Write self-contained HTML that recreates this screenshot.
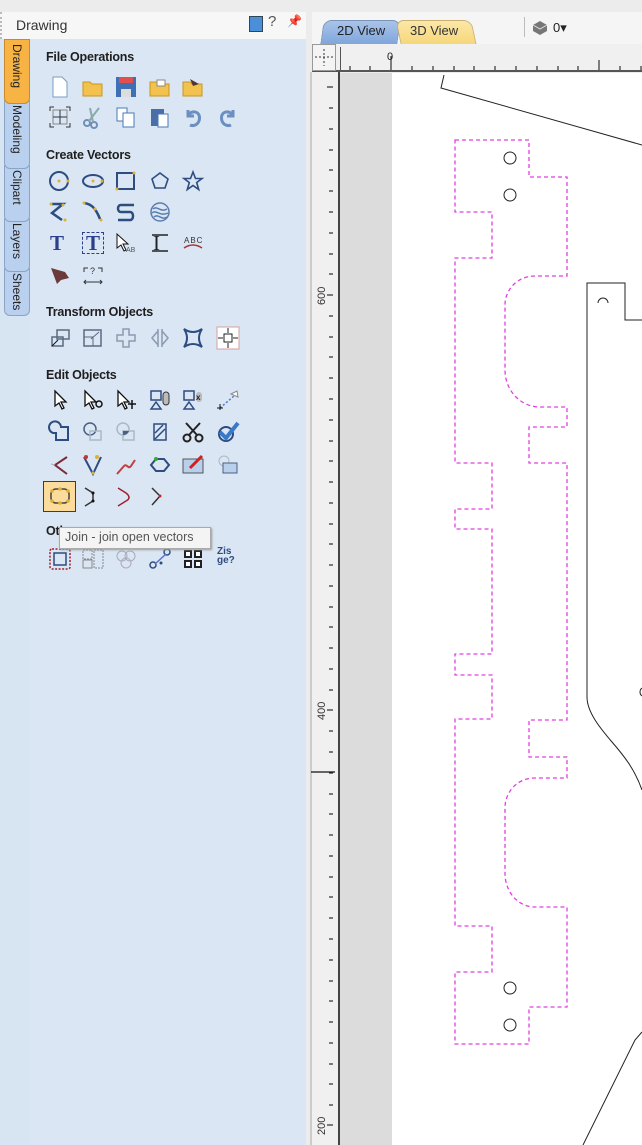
<!DOCTYPE html>
<html><head><meta charset="utf-8"><style>
*{margin:0;padding:0;box-sizing:border-box}
body{width:642px;height:1145px;overflow:hidden;background:#ececec;font-family:"Liberation Sans",sans-serif;position:relative}
.a{position:absolute}
.h{position:absolute;left:46px;font-size:12.5px;font-weight:bold;color:#1e1e1e;letter-spacing:-0.2px}
.tab{position:absolute;left:4px;width:26px;border:1px solid #8aa4c8;border-radius:0 0 6px 6px;background:#b9d0ee;font-size:12px;color:#222}
.tab span{position:absolute;left:5px;top:4px;writing-mode:vertical-rl;white-space:nowrap}
svg.i{position:absolute;width:22px;height:22px;overflow:visible}
</style></head><body>
<!-- left header -->
<div class="a" style="left:0;top:12px;width:306px;height:27px;background:#f7f7f7;border-left:2px dotted #bbb"></div>
<div class="a" style="left:16px;top:17px;font-size:14px;color:#333">Drawing</div>
<div class="a" style="left:249px;top:16px;width:14px;height:16px;border:1px solid #345;background:#4a90d9"></div>
<div class="a" style="left:268px;top:13px;font-size:15px;color:#555">?</div>
<div class="a" style="left:287px;top:14px;font-size:12px;color:#222">&#x1F4CC;</div>
<!-- panel -->
<div class="a" style="left:0;top:39px;width:306px;height:1106px;background:#d7e4f2"></div>
<div class="a" style="left:30px;top:39px;width:276px;height:1106px;background:#dae6f3"></div>
<div class="tab" style="top:268px;height:48px"><span>Sheets</span></div>
<div class="tab" style="top:218px;height:54px"><span>Layers</span></div>
<div class="tab" style="top:165px;height:57px"><span>Clipart</span></div>
<div class="tab" style="top:100px;height:69px"><span>Modeling</span></div>
<div class="tab" style="top:39px;height:65px;background:#f7b445;border-color:#c88a2a"><span>Drawing</span></div>

<div class="h" style="top:50px">File Operations</div>
<div class="h" style="top:148px">Create Vectors</div>
<div class="h" style="top:305px">Transform Objects</div>
<div class="h" style="top:368px">Edit Objects</div>
<div class="h" style="top:524px">Other</div>

<!-- File ops -->
<svg class="i" style="left:49px;top:76px"><path d="M4 1h9l5 5v15H4z" fill="#fff" stroke="#7a9cc8"/></svg>
<svg class="i" style="left:82px;top:76px"><path d="M1 6h7l2 2h10v12H1z" fill="#f3c24e" stroke="#c8951e"/></svg>
<svg class="i" style="left:115px;top:76px"><rect x="1" y="1" width="20" height="20" fill="#3f6fb5"/><rect x="4" y="1" width="14" height="6" fill="#e05050"/><rect x="6" y="13" width="10" height="8" fill="#ddd"/></svg>
<svg class="i" style="left:149px;top:76px"><path d="M1 6h7l2 2h10v12H1z" fill="#f3c24e" stroke="#c8951e"/><rect x="8" y="4" width="8" height="6" fill="#fff" stroke="#888"/></svg>
<svg class="i" style="left:182px;top:76px"><path d="M1 6h7l2 2h10v12H1z" fill="#f3c24e" stroke="#c8951e"/><path d="M8 3l9 5-6 2z" fill="#533"/></svg>
<svg class="i" style="left:49px;top:106px"><rect x="4" y="4" width="14" height="14" fill="none" stroke="#888"/><path d="M11 4v14M4 11h14M1 5V1h4M17 1h4v4M1 17v4h4M21 17v4h-4" stroke="#333" fill="none"/></svg>
<svg class="i" style="left:82px;top:106px"><circle cx="5" cy="17" r="3" fill="none" stroke="#6f8fb8" stroke-width="2"/><circle cx="12" cy="19" r="3" fill="none" stroke="#6f8fb8" stroke-width="2"/><path d="M7 15l10-13M11 16l-3-14" stroke="#8aa" stroke-width="2"/></svg>
<svg class="i" style="left:115px;top:106px"><rect x="2" y="2" width="10" height="13" fill="#fff" stroke="#4a78b8"/><rect x="8" y="7" width="11" height="14" fill="#fff" stroke="#4a78b8"/></svg>
<svg class="i" style="left:149px;top:106px"><rect x="2" y="3" width="13" height="17" fill="#4a6fa8"/><rect x="9" y="8" width="10" height="13" fill="#fff" stroke="#4a78b8"/></svg>
<svg class="i" style="left:182px;top:106px"><path d="M6 4v6h6M6 10c3-7 14-5 11 5-2 5-7 5-9 4" fill="none" stroke="#6a8fc0" stroke-width="3"/></svg>
<svg class="i" style="left:217px;top:106px"><path d="M16 4v6h-6M16 10c-3-7-14-5-11 5 2 5 7 5 9 4" fill="none" stroke="#6a8fc0" stroke-width="3"/></svg>
<!-- Create vectors -->
<g></g>
<svg class="i" style="left:49px;top:170px"><circle cx="10" cy="11" r="9" fill="none" stroke="#2d4c80" stroke-width="2"/><circle cx="10" cy="11" r="1.5" fill="#e0b030"/><circle cx="19" cy="11" r="1.5" fill="#e0b030"/></svg>
<svg class="i" style="left:82px;top:170px"><ellipse cx="11" cy="11" rx="10" ry="6" fill="none" stroke="#2d4c80" stroke-width="2"/><circle cx="11" cy="11" r="1.5" fill="#e0b030"/><circle cx="20" cy="11" r="1.5" fill="#e0b030"/></svg>
<svg class="i" style="left:115px;top:170px"><rect x="2" y="3" width="17" height="16" fill="none" stroke="#2d4c80" stroke-width="2"/><circle cx="19" cy="3" r="1.5" fill="#e0b030"/><circle cx="2" cy="19" r="1.5" fill="#e0b030"/></svg>
<svg class="i" style="left:149px;top:170px"><path d="M11 3l8 6-3 9H6L3 9z" fill="none" stroke="#2d4c80" stroke-width="1.6"/></svg>
<svg class="i" style="left:182px;top:170px"><path d="M11 2l2.5 6.5H20l-5.3 4 2 7L11 15.5 5.3 19.5l2-7L2 8.5h6.5z" fill="none" stroke="#2d4c80" stroke-width="1.6"/></svg>
<svg class="i" style="left:49px;top:201px"><path d="M2 3h12L3 12l10 7" fill="none" stroke="#2d4c80" stroke-width="2.5"/><circle cx="2" cy="3" r="1.5" fill="#e0b030"/><circle cx="14" cy="4" r="1.5" fill="#e0b030"/><circle cx="16" cy="19" r="1.5" fill="#e0b030"/></svg>
<svg class="i" style="left:82px;top:201px"><path d="M2 2c8 1 12 6 16 16" fill="none" stroke="#2d4c80" stroke-width="2.5"/><circle cx="2" cy="2" r="1.5" fill="#e0b030"/><circle cx="13" cy="8" r="1.5" fill="#e0b030"/><circle cx="19" cy="19" r="1.5" fill="#e0b030"/></svg>
<svg class="i" style="left:115px;top:201px"><path d="M19 4H6C2 4 2 11 6 11h9c4 0 4 8 0 8H3" fill="none" stroke="#2d4c80" stroke-width="2.5"/></svg>
<svg class="i" style="left:149px;top:201px"><circle cx="11" cy="11" r="9" fill="none" stroke="#5a7db0" stroke-width="1.5"/><path d="M4 8c4-4 8 4 14 0M3 12c4-4 8 4 16 0M5 16c4-4 8 4 13 0" stroke="#5a7db0" fill="none" stroke-width="1.5"/></svg>
<div class="a" style="left:50px;top:231px;font:bold 21px 'Liberation Serif',serif;color:#2b3f8a">T</div>
<div class="a" style="left:82px;top:232px;width:22px;height:22px;border:1px dashed #2b3f8a"></div>
<div class="a" style="left:86px;top:231px;font:bold 21px 'Liberation Serif',serif;color:#2b3f8a">T</div>
<svg class="i" style="left:115px;top:232px"><path d="M2 2v14l4-3 3 6 2-1-3-6h5z" fill="#fff" stroke="#111"/><text x="11" y="20" font-size="7" fill="#555" font-family="Liberation Sans">AB</text></svg>
<div class="a" style="left:153px;top:231px;font:21px 'Liberation Serif',serif;color:#222">I</div>
<svg class="i" style="left:149px;top:232px"><path d="M3 3h16M3 19h16" stroke="#222" stroke-width="1.5"/></svg>
<div class="a" style="left:184px;top:236px;font-size:8px;color:#333;letter-spacing:1px">ABC</div>
<svg class="i" style="left:182px;top:232px"><path d="M2 16c6-4 12-4 18 0" stroke="#a33" stroke-width="1.5" fill="none"/></svg>
<svg class="i" style="left:49px;top:264px"><path d="M2 4l14 4 4 6-8 2-4 4z" fill="#6b3a3a"/></svg>
<svg class="i" style="left:82px;top:264px"><path d="M2 8V4h4M16 4h4v4M2 18h18M4 16l-2 2 2 2M18 16l2 2-2 2" fill="none" stroke="#333"/><text x="8" y="10" font-size="9" fill="#333" font-family="Liberation Sans">?</text></svg>
<!-- Transform -->
<svg class="i" style="left:49px;top:327px"><rect x="8" y="3" width="12" height="9" fill="none" stroke="#5a6a80" stroke-width="1.5"/><rect x="3" y="10" width="11" height="9" fill="none" stroke="#5a6a80" stroke-width="1.5"/><path d="M3 19l6-6" stroke="#111"/></svg>
<svg class="i" style="left:82px;top:327px"><rect x="2" y="3" width="17" height="16" fill="none" stroke="#5a6a80" stroke-width="1.5"/><path d="M2 10h9v9M9 12l8-7" stroke="#5a6a80" fill="none"/></svg>
<svg class="i" style="left:115px;top:327px"><path d="M8 2h6v6h6v6h-6v6H8v-6H2V8h6z" fill="none" stroke="#8a9ab0" stroke-width="1.5"/></svg>
<svg class="i" style="left:149px;top:327px"><path d="M9 2v18M13 2v18M9 4L3 11l6 7M13 4l6 7-6 7" fill="none" stroke="#8a9ab0" stroke-width="1.5"/></svg>
<svg class="i" style="left:182px;top:327px"><path d="M2 2c6 4 12 4 18 0c-4 6-4 12 0 18c-6-4-12-4-18 0c4-6 4-12 0-18z" fill="none" stroke="#2d4c80" stroke-width="2"/></svg>
<svg class="i" style="left:217px;top:327px"><rect x="0" y="0" width="22" height="22" fill="#fff" stroke="#d8a0a0"/><rect x="7" y="7" width="8" height="8" fill="none" stroke="#222"/><path d="M11 1v5M11 16v5M1 11h5M16 11h5" stroke="#222"/></svg>
<!-- Edit -->
<svg class="i" style="left:49px;top:389px"><path d="M6 2v15l4-3 3 6 2-1-3-6h5z" fill="#fff" stroke="#111" stroke-width="1.3"/></svg>
<svg class="i" style="left:82px;top:389px"><path d="M3 2v15l4-3 3 6 2-1-3-6h5z" fill="#fff" stroke="#111" stroke-width="1.3"/><circle cx="17" cy="15" r="3" fill="none" stroke="#111" stroke-width="1.5"/></svg>
<svg class="i" style="left:115px;top:389px"><path d="M3 2v15l4-3 3 6 2-1-3-6h5z" fill="#fff" stroke="#111" stroke-width="1.3"/><path d="M17 11v9M13 15h8" stroke="#111" stroke-width="1.5"/></svg>
<svg class="i" style="left:149px;top:389px"><rect x="2" y="2" width="10" height="9" fill="none" stroke="#2d4c80" stroke-width="1.5"/><path d="M2 20l5-7 5 7z" fill="none" stroke="#2d4c80" stroke-width="1.5"/><rect x="14" y="3" width="6" height="13" rx="3" fill="#bbb" stroke="#333"/></svg>
<svg class="i" style="left:182px;top:389px"><rect x="2" y="2" width="10" height="9" fill="none" stroke="#2d4c80" stroke-width="1.5"/><path d="M2 20l5-7 5 7z" fill="none" stroke="#2d4c80" stroke-width="1.5"/><rect x="14" y="3" width="6" height="10" rx="3" fill="#bbb"/><text x="14" y="11" font-size="8" font-weight="bold" fill="#222" font-family="Liberation Sans">x</text></svg>
<svg class="i" style="left:217px;top:389px"><path d="M3 19l14-12" stroke="#5a6fd0" stroke-dasharray="2 2" stroke-width="1.5"/><path d="M3 15v6M0 19h6" stroke="#111"/><path d="M14 5l6-3 1 6z" fill="#fff" stroke="#888"/></svg>
<svg class="i" style="left:49px;top:421px"><path d="M4 12a6 6 0 1 1 8-6h7v13H7v-7z" fill="none" stroke="#2d4c80" stroke-width="2"/></svg>
<svg class="i" style="left:82px;top:421px"><circle cx="8" cy="8" r="6" fill="none" stroke="#4a6080" stroke-width="1.5"/><rect x="8" y="10" width="11" height="9" fill="none" stroke="#aab8c8" stroke-width="1.5"/></svg>
<svg class="i" style="left:115px;top:421px"><circle cx="8" cy="8" r="6" fill="none" stroke="#aab8c8" stroke-width="1.5"/><rect x="8" y="10" width="11" height="9" fill="none" stroke="#aab8c8" stroke-width="1.5"/><path d="M8 10h6v0a6 6 0 0 1-6 4z" fill="#4a6080"/></svg>
<svg class="i" style="left:149px;top:421px"><rect x="5" y="3" width="12" height="16" fill="none" stroke="#2d4c80" stroke-width="1.5"/><path d="M6 12l8-8M6 18l10-10" stroke="#2d4c80" stroke-width="1.5"/></svg>
<svg class="i" style="left:182px;top:421px"><circle cx="5" cy="17" r="3.5" fill="none" stroke="#222" stroke-width="2"/><circle cx="17" cy="17" r="3.5" fill="none" stroke="#222" stroke-width="2"/><path d="M7 14L18 2M15 14L4 2" stroke="#222" stroke-width="2"/></svg>
<svg class="i" style="left:217px;top:421px"><circle cx="9" cy="13" r="7" fill="none" stroke="#2d4c80" stroke-width="2"/><path d="M3 11l6 6L21 2" stroke="#3a78c8" stroke-width="4" fill="none"/></svg>
<svg class="i" style="left:49px;top:454px"><path d="M18 3L6 11l12 9" fill="none" stroke="#7a2a3a" stroke-width="2"/><path d="M6 11l-4-1" stroke="#aab"/></svg>
<svg class="i" style="left:82px;top:454px"><path d="M2 3l9 17 8-17" fill="none" stroke="#2d4c80" stroke-width="2"/><circle cx="4" cy="3" r="2" fill="#d03030"/><circle cx="15" cy="3" r="2" fill="#e0b030"/><circle cx="11" cy="19" r="1.5" fill="#e0b030"/></svg>
<svg class="i" style="left:115px;top:454px"><path d="M2 20l7-8c3-3 4 4 7 0l4-6" fill="none" stroke="#c04040" stroke-width="2"/></svg>
<svg class="i" style="left:149px;top:454px"><path d="M7 5h8l5 6-5 6H7l-5-6z" fill="none" stroke="#2d4c80" stroke-width="2"/><circle cx="7" cy="5" r="2" fill="#3a3"/></svg>
<svg class="i" style="left:182px;top:454px"><rect x="1" y="5" width="20" height="14" fill="#b8d0ec" stroke="#555"/><path d="M8 14l12-12" stroke="#d02020" stroke-width="3"/></svg>
<svg class="i" style="left:217px;top:454px"><circle cx="7" cy="7" r="5" fill="none" stroke="#aab8c8"/><rect x="6" y="9" width="14" height="10" fill="#b8d0ec" stroke="#4a6080"/></svg>
<div class="a" style="left:43px;top:481px;width:33px;height:31px;background:#fbdc9c;border:1px solid #2a3a7a"></div>
<svg class="i" style="left:49px;top:485px"><rect x="2" y="4" width="18" height="14" rx="5" fill="none" stroke="#444" stroke-width="1.5"/><circle cx="3" cy="6" r="1.8" fill="#e0b030"/><circle cx="19" cy="6" r="1.8" fill="#e0b030"/><circle cx="3" cy="16" r="1.8" fill="#e0b030"/><circle cx="19" cy="16" r="1.8" fill="#e0b030"/><circle cx="11" cy="18" r="1.8" fill="#e0b030"/><circle cx="11" cy="4" r="1.8" fill="#e0b030"/></svg>
<svg class="i" style="left:82px;top:485px"><path d="M3 3l8 5v8l-8 5" fill="none" stroke="#333" stroke-width="1.5"/><circle cx="11" cy="8" r="1.5" fill="#111"/><circle cx="11" cy="16" r="1.5" fill="#111"/></svg>
<svg class="i" style="left:115px;top:485px"><path d="M3 3l8 5c4 3 4 6 0 8l-8 5" fill="none" stroke="#a02030" stroke-width="1.5"/></svg>
<svg class="i" style="left:149px;top:485px"><path d="M3 3l8 8-8 9" fill="none" stroke="#333" stroke-width="1.5"/><circle cx="11" cy="11" r="1.5" fill="#d02020"/></svg>
<!-- Other row -->
<svg class="i" style="left:49px;top:548px"><rect x="1" y="1" width="20" height="20" rx="2" fill="none" stroke="#a02030" stroke-dasharray="2 1.5" stroke-width="1.5"/><rect x="5" y="5" width="12" height="12" fill="none" stroke="#2d4c80" stroke-width="1.5"/></svg>
<svg class="i" style="left:82px;top:548px"><rect x="1" y="2" width="9" height="9" fill="none" stroke="#888" stroke-dasharray="2 1"/><rect x="12" y="2" width="9" height="18" fill="none" stroke="#888" stroke-dasharray="2 1"/><rect x="1" y="12" width="9" height="8" fill="none" stroke="#888"/></svg>
<svg class="i" style="left:115px;top:548px"><circle cx="7" cy="8" r="5" fill="none" stroke="#aab"/><circle cx="15" cy="8" r="5" fill="none" stroke="#aab"/><circle cx="11" cy="15" r="5" fill="none" stroke="#aab"/></svg>
<svg class="i" style="left:149px;top:548px"><circle cx="4" cy="17" r="3" fill="none" stroke="#2d4c80" stroke-width="1.5"/><circle cx="18" cy="4" r="3" fill="none" stroke="#2d4c80" stroke-width="1.5"/><path d="M6 16l11-10" stroke="#5a6fd0" stroke-width="1.5"/><circle cx="12" cy="15" r="1.5" fill="#2d4c80"/></svg>
<svg class="i" style="left:182px;top:548px"><rect x="2" y="2" width="8" height="8" fill="#222"/><rect x="12" y="2" width="8" height="8" fill="#222"/><rect x="2" y="12" width="8" height="8" fill="#222"/><rect x="12" y="12" width="8" height="8" fill="#222"/><rect x="4" y="4" width="4" height="4" fill="#fff"/><rect x="14" y="4" width="4" height="4" fill="#fff"/><rect x="4" y="14" width="4" height="4" fill="#fff"/><rect x="14" y="14" width="4" height="4" fill="#fff"/></svg>
<div class="a" style="left:217px;top:547px;font:bold 10px/9px 'Liberation Sans',sans-serif;color:#2d4c80;width:24px">Zis<br>ge?</div>
<!-- tooltip -->
<div class="a" style="left:59px;top:527px;width:152px;height:22px;background:#f4f4f4;border:1px solid #aaa;box-shadow:1px 1px 2px #999;font-size:12.5px;color:#555;padding:2px 0 0 5px;white-space:nowrap">Join - join open vectors</div>

<!-- right area -->
<div class="a" style="left:306px;top:12px;width:336px;height:1133px;background:#ececec"></div>
<div class="a" style="left:312px;top:12px;width:330px;height:32px;background:#f5f5f5"></div>
<div class="a" style="left:322px;top:20px;width:77px;height:24px;background:linear-gradient(#a9c4ea,#7fa6dc);border:1px solid #7a94b8;border-bottom:none;border-radius:8px 8px 0 0;transform:skewX(-8deg)"></div>
<div class="a" style="left:337px;top:23px;font-size:13px;color:#222">2D View</div>
<div class="a" style="left:398px;top:20px;width:76px;height:24px;background:linear-gradient(#fbe7a8,#f6d77a);border:1px solid #c8b070;border-bottom:none;border-radius:8px 8px 0 0;transform:skewX(12deg)"></div>
<div class="a" style="left:410px;top:23px;font-size:13px;color:#333">3D View</div>
<div class="a" style="left:524px;top:17px;width:1px;height:20px;background:#bbb"></div>
<svg class="a" style="left:531px;top:20px" width="18" height="16"><path d="M2 5l7-4 7 4v6l-7 4-7-4z" fill="#777"/><path d="M2 5l7 4 7-4" stroke="#ddd" fill="none"/></svg>
<div class="a" style="left:553px;top:20px;font-size:13px;color:#222">0▾</div>

<!-- rulers -->
<div class="a" style="left:312px;top:44px;width:330px;height:28px;background:#f0f0f0;border-bottom:2px solid #555"></div>
<div class="a" style="left:312px;top:44px;width:24px;height:27px;border:1px solid #999;background:#f4f4f4"></div>
<svg class="a" style="left:312px;top:44px" width="24" height="27"><path d="M12 5v17M3 13h18" stroke="#333" stroke-dasharray="2 2"/></svg>
<div class="a" style="left:340px;top:47px;width:1px;height:24px;background:#555"></div>
<div class="a" style="left:310px;top:72px;width:28px;height:1073px;background:#f0f0f0;border-left:2px solid #ccc"></div>
<div class="a" style="left:338px;top:72px;width:2px;height:1073px;background:#444"></div>
<svg class="a" style="left:0;top:0" width="642" height="1145">
<g stroke="#333" stroke-width="1.2">
<path d="M350 70v-4M370 70v-4M391 70v-14M412 70v-4M433 70v-4M454 70v-4M474 70v-4M495 70v-4M516 70v-4M537 70v-4M558 70v-4M578 70v-4M599 70v-10M620 70v-4M641 70v-4"/>
<path d="M327 87h6M329 108h4M329 129h4M329 150h4M329 170h4M329 191h4M329 212h4M329 233h4M329 254h4M329 274h4M327 295h6M329 316h4M329 337h4M329 357h4M329 378h4M329 399h4M329 420h4M329 441h4M329 461h4M329 482h4M329 503h4M329 524h4M329 544h4M329 565h4M329 586h4M329 607h4M329 627h4M329 648h4M329 669h4M329 690h4M327 710h6M329 731h4M329 752h4M329 773h4M329 794h4M329 814h4M329 835h4M329 856h4M329 877h4M329 897h4M329 918h4M329 939h4M329 960h4M329 981h4M329 1001h4M329 1022h4M329 1043h4M329 1064h4M329 1084h4M329 1105h4M327 1125h6"/>
<path d="M311 772h24" stroke="#111"/>
</g>
<text x="387" y="60" font-size="11" font-family="Liberation Sans" fill="#222">0</text>
<g font-size="11" font-family="Liberation Sans" fill="#333">
<text transform="translate(325,305) rotate(-90)">600</text>
<text transform="translate(325,720) rotate(-90)">400</text>
<text transform="translate(325,1135) rotate(-90)">200</text>
</g>
</svg>
<!-- canvas -->
<div class="a" style="left:340px;top:73px;width:302px;height:1072px;background:#fff"></div>
<div class="a" style="left:340px;top:73px;width:52px;height:1072px;background:#dcdcdc"></div>
<svg class="a" style="left:0;top:0" width="642" height="1145">
<g fill="none" stroke="#222" stroke-width="1">
<path d="M444 75L441 88L642 145"/>
<path d="M642 320H625V283H587V697C587 712 600 728 612 742C625 757 635 770 642 790"/>
<path d="M598 303a5 5 0 0 1 10 0"/>
<path d="M642 688a5 5 0 0 0 0 8"/>
<path d="M583 1145L635 1040L642 1032"/>
<circle cx="510" cy="158" r="6"/><circle cx="510" cy="195" r="6"/>
<circle cx="510" cy="988" r="6"/><circle cx="510" cy="1025" r="6"/>
</g>
<path fill="none" stroke="#e040e0" stroke-width="1.3" stroke-dasharray="4 3" d="M455 140H529V177H567V276H535C517 276 505 290 505 305V370C505 390 520 407 540 407H567V427H529V463H567V720H529V757H567V778H535C517 778 505 792 505 808V873C505 892 518 907 535 907H567V1007H529V1044H455V972H492V926H455V719H492V675H455V654H492V529H455V509H492V463H455V258H492V212H455Z"/>
</svg>
</body></html>
